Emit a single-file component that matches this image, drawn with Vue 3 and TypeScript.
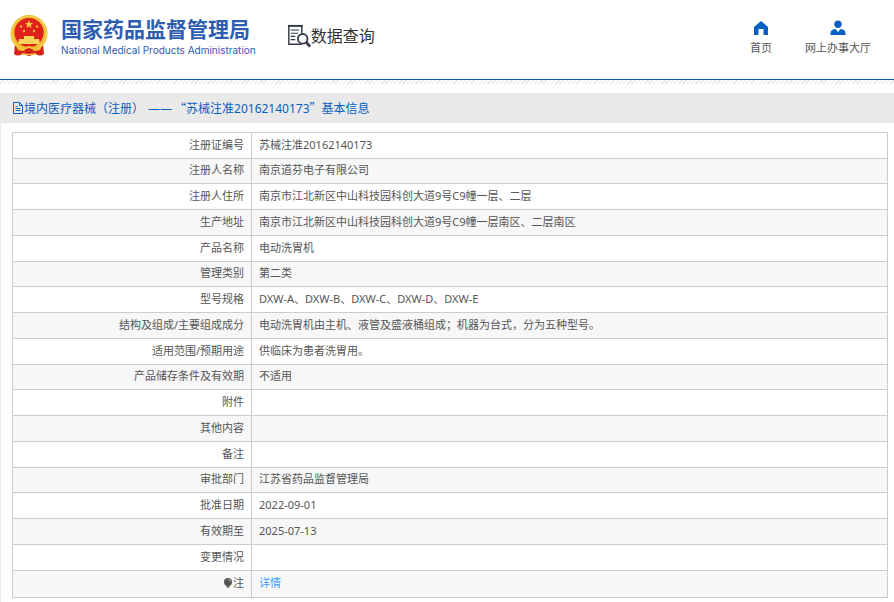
<script setup lang="ts">
interface Row {
  label: string
  value: string
}

const rows: Row[] = [
  { label: '注册证编号', value: '苏械注准20162140173' },
  { label: '注册人名称', value: '南京道芬电子有限公司' },
  { label: '注册人住所', value: '南京市江北新区中山科技园科创大道9号C9幢一层、二层' },
  { label: '生产地址', value: '南京市江北新区中山科技园科创大道9号C9幢一层南区、二层南区' },
  { label: '产品名称', value: '电动洗胃机' },
  { label: '管理类别', value: '第二类' },
  { label: '型号规格', value: 'DXW-A、DXW-B、DXW-C、DXW-D、DXW-E' },
  { label: '结构及组成/主要组成成分', value: '电动洗胃机由主机、液管及盛液桶组成；机器为台式，分为五种型号。' },
  { label: '适用范围/预期用途', value: '供临床为患者洗胃用。' },
  { label: '产品储存条件及有效期', value: '不适用' },
  { label: '附件', value: '' },
  { label: '其他内容', value: '' },
  { label: '备注', value: '' },
  { label: '审批部门', value: '江苏省药品监督管理局' },
  { label: '批准日期', value: '2022-09-01' },
  { label: '有效期至', value: '2025-07-13' },
  { label: '变更情况', value: '' },
]
</script>

<template>
  <div class="page">
    <header class="header">
      <a class="brand" href="#">
        <svg class="emblem" viewBox="0 0 38 42" aria-hidden="true">
          <path d="M5 29 L4 39 Q8 42 12 39 L19 41 L26 39 Q30 42 34 39 L33 29Z" fill="#d51f19" />
          <circle cx="19" cy="18.500" r="18.500" fill="#edb92e" />
          <circle cx="19" cy="18.500" r="17" fill="none" stroke="#f8d45a" stroke-width="1.200" />
          <circle cx="19" cy="17.500" r="14.600" fill="#e0201b" />
          <path d="M19 5l1.100 2.900 3.100.1-2.400 1.900.8 3-2.600-1.700-2.600 1.700.8-3-2.400-1.900 3.100-.1z" fill="#f8cc3d" />
          <g fill="#f3b936">
            <circle cx="11" cy="11.500" r="1.200" /><circle cx="27" cy="11.500" r="1.200" />
            <circle cx="14" cy="16" r="1.200" /><circle cx="24" cy="16" r="1.200" />
          </g>
          <path d="M14 21h10v3h5l1 5H8l1-5h5z" fill="#fbd45a" />
          <path d="M6 31q6 3 10 1 3-2 6 0 4 2 10-1l-2 4q-5 2-8-1-3-2-6 0-3 3-8 1z" fill="#f3c43b" />
          <path d="M14 35l5-2 5 2-2 3h-6z" fill="#d51f19" />
          <path d="M12 38l7 1 7-1v2H12z" fill="#f3c43b" />
        </svg>
        <span class="names">
          <span class="name-zh">国家药品监督管理局</span>
          <span class="name-en">National Medical Products Administration</span>
        </span>
      </a>
      <h1 class="section">
        <svg class="section-icon" viewBox="0 0 26 26" fill="none" stroke="#353a48" aria-hidden="true">
          <path d="M16 22H2V2h14v8" stroke-width="1.600" />
          <path d="M1 2h16" stroke-width="2" />
          <path d="M4 6.500h9M4 10h8M4 13.500h5M4 17h5" stroke-width="1.300" />
          <circle cx="17" cy="16" r="5.200" stroke-width="2" fill="#fff" />
          <path d="M20.500 19.500l4.500 5" stroke-width="3" />
        </svg>
        <span>数据查询</span>
      </h1>
      <nav class="nav">
        <a class="nav-link" href="#">
          <svg viewBox="0 0 16 16" aria-hidden="true"><path d="M8 1l7 6v8h-4.500V9h-5v6H1V7z" fill="#0960c0" /></svg>
          <span>首页</span>
        </a>
        <a class="nav-link" href="#">
          <svg viewBox="0 0 16 16" aria-hidden="true"><circle cx="8" cy="4.200" r="3.700" fill="#0960c0" /><path d="M.5 15v-2q0-3.500 5-4l2.500 3 2.500-3q5 .5 5 4v2z" fill="#0960c0" /></svg>
          <span>网上办事大厅</span>
        </a>
      </nav>
    </header>
    <div class="hatch"></div>

    <main class="content">
      <h2 class="title">
        <svg class="doc-icon" viewBox="0 0 12 12" fill="none" stroke="#0960c0" aria-hidden="true">
          <path d="M1.500 .5h6l3 3v8h-9zM7.500.5v3h3M3.500 4.500h2M3.500 6.500h5M3.500 8.500h5" />
        </svg>
        <span>境内医疗器械（注册）<span class="dash">——</span><span class="quote">“</span>苏械注准20162140173<span class="quote">”</span>基本信息</span>
      </h2>
      <div class="panel">
        <table class="info">
          <tbody>
            <tr v-for="row in rows" :key="row.label">
              <th scope="row">{{ row.label }}</th>
              <td>{{ row.value }}</td>
            </tr>
            <tr>
              <th scope="row">
                <svg class="bulb" viewBox="0 0 8 10" aria-hidden="true"><circle cx="4" cy="4" r="4" fill="#555" /><path d="M2.500 7h3v2.500h-3z" fill="#555" /><path d="M4.500 1.500q2 .3 2 2" stroke="#ddd" stroke-width=".8" fill="none" /></svg>注
              </th>
              <td><a class="detail" href="#">详情</a></td>
            </tr>
          </tbody>
        </table>
      </div>
    </main>
  </div>
</template>

<style>
body {
  margin: 0;
  background: #fff;
}
</style>

<style scoped>
.page {
  font-family: "Noto Sans", "Noto Sans CJK SC", sans-serif;
  font-size: 11px;
  color: #555;
}
a {
  color: inherit;
  text-decoration: none;
}
.header {
  display: flex;
  align-items: center;
  height: 79px;
  box-sizing: border-box;
  padding: 0 23px 8px 10px;
}
.brand {
  display: flex;
  align-items: center;
  gap: 13px;
  color: #2d5db0;
}
.emblem {
  width: 38px;
  height: 42px;
}
.names {
  display: flex;
  flex-direction: column;
  padding-top: 2px;
}
.name-zh {
  font-size: 21px;
  line-height: 26px;
  font-weight: 700;
}
.name-en {
  font-family: Inter, "Liberation Sans", sans-serif;
  font-size: 10px;
  line-height: 16px;
}
.section {
  display: flex;
  align-items: center;
  margin: 0 0 0 31px;
  font-size: 16px;
  line-height: 24px;
  font-weight: 400;
  color: #333;
}
.section-icon {
  width: 24px;
  height: 24px;
}
.nav {
  display: flex;
  gap: 33px;
  margin-left: auto;
  padding-top: 4px;
}
.nav-link {
  display: flex;
  flex-direction: column;
  align-items: center;
  gap: 4px;
  line-height: 16px;
}
.nav-link svg {
  width: 16px;
  height: 16px;
}
.hatch {
  height: 4px;
  border-top: 1px solid #0b5cab;
  background: repeating-linear-gradient(135deg, #fff 0 2px, #e4e4e4 2px 3px);
}
.content {
  margin-top: 9px;
}
.title {
  display: flex;
  align-items: center;
  margin: 0;
  padding: 0 12px;
  height: 30px;
  background: #e9e9e9;
  color: #0960c0;
  font-size: 12px;
  font-weight: 400;
}
.doc-icon {
  width: 12px;
  height: 12px;
}
.dash {
  margin: 0 2px 0 4px;
}
.quote {
  font-family: "Noto Sans CJK SC", sans-serif;
}
.panel {
  padding: 9px 6px 4px 11px;
  border-left: 1px solid #e9e9ee;
}
.info {
  width: 100%;
  border-collapse: collapse;
  border: 1px solid #ccc;
}
.info tr {
  height: 26px;
}
.info tr:nth-child(4n + 2) {
  height: 25px;
}
.info tr:last-child {
  height: 27px;
}
.info tr:nth-child(even) {
  background: #f7f7f7;
}
.info th,
.info td {
  padding: 0 7px 2px;
  border: 1px solid #ccc;
  line-height: 16px;
  font-weight: 400;
  text-align: left;
}
.info th {
  width: 224px;
  text-align: right;
}
.bulb {
  width: 8px;
  height: 10px;
  margin-right: 1px;
  vertical-align: -1px;
}
.detail {
  color: #409eff;
}
</style>
